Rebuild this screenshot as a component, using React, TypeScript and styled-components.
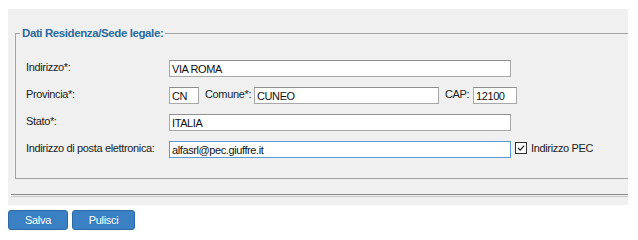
import styled, { createGlobalStyle } from "styled-components";

const FONT = `"Liberation Sans", Arial, sans-serif`;

const GlobalStyle = createGlobalStyle`
  body {
    margin: 0;
    background: #ffffff;
    font-family: ${FONT};
    color: #222222;
  }
`;

const Page = styled.div`
  padding: 9px 10px 0 8px;
`;

const Panel = styled.div`
  width: 620px;
  background: #f0f0f0;
  padding: 16px 0 8px 0;
  overflow: hidden;
`;

const FieldSet = styled.fieldset`
  margin: 0 0 0 7px;
  padding: 0;
  border: 1px solid #a3a3a3;
  border-right: none;
  min-width: 0;
`;

const Legend = styled.legend`
  margin-left: 4px;
  padding: 0 2px;
  font-family: ${FONT};
  font-size: 11.5px;
  letter-spacing: -0.4px;
  line-height: 16px;
  font-weight: bold;
  color: #2a6a9c;
`;

const FormGrid = styled.div`
  display: grid;
  grid-template-columns: 143px 1fr;
  row-gap: 10px;
  align-items: center;
  padding: 19px 0 20px 10px;
`;

const Label = styled.label`
  font-size: 11px;
  letter-spacing: -0.35px;
  line-height: 14px;
  color: #222222;
  margin-top: -3px;
  white-space: nowrap;
`;

const Cell = styled.div`
  display: flex;
  align-items: center;
`;

const Input = styled.input<{ $w: number; $focused?: boolean }>`
  box-sizing: border-box;
  width: ${(p) => p.$w}px;
  height: 17px;
  margin: 0;
  padding: 1px 2px 0;
  border: 1px solid ${(p) => (p.$focused ? "#5b9bd5" : "#a8a8a8")};
  border-top-color: ${(p) => (p.$focused ? "#5b9bd5" : "#8f8f8f")};
  background: #ffffff;
  font-family: ${FONT};
  font-size: 11px;
  letter-spacing: -0.4px;
  color: #111111;
  outline: none;
`;

const InlineLabel = styled.span<{ $w: number }>`
  width: ${(p) => p.$w}px;
  margin: -4px 0 0 6px;
  font-size: 11px;
  letter-spacing: -0.35px;
  color: #222222;
  white-space: nowrap;
`;

const CheckWrap = styled.label`
  display: flex;
  align-items: center;
  margin-left: 4px;
  margin-top: -4px;
  font-size: 11px;
  letter-spacing: -0.35px;
  color: #222222;
`;

const Box = styled.span`
  display: inline-flex;
  width: 12px;
  height: 12px;
  box-sizing: border-box;
  border: 1px solid #333333;
  background: #ffffff;
  margin-right: 4px;
`;

const Rule = styled.div`
  margin: 15px 0 0 3px;
  height: 1px;
  border-top: 1px solid #8a8a8a;
  border-bottom: 1px solid #c8c8c8;
`;

const Actions = styled.div`
  display: flex;
  gap: 4px;
  margin-top: 5px;
`;

const Button = styled.button<{ $w: number }>`
  width: ${(p) => p.$w}px;
  height: 20px;
  padding: 0;
  border: 1px solid #2d6aa5;
  border-radius: 3px;
  background: #3a80c2;
  color: #ffffff;
  font-family: ${FONT};
  font-size: 11px;
  letter-spacing: -0.3px;
`;

const Check = () => (
  <Box>
    <svg width="10" height="10" viewBox="0 0 10 10">
      <path d="M2 5 L4.2 7.2 L8.2 2.6" fill="none" stroke="#222" strokeWidth="1.2" />
    </svg>
  </Box>
);

export default function App() {
  return (
    <Page>
      <GlobalStyle />
      <Panel>
        <FieldSet>
          <Legend>Dati Residenza/Sede legale:</Legend>
          <FormGrid>
            <Label>Indirizzo*:</Label>
            <Cell>
              <Input $w={342} defaultValue="VIA ROMA" />
            </Cell>

            <Label>Provincia*:</Label>
            <Cell>
              <Input $w={30} defaultValue="CN" />
              <InlineLabel $w={49}>Comune*:</InlineLabel>
              <Input $w={185} defaultValue="CUNEO" />
              <InlineLabel $w={28}>CAP:</InlineLabel>
              <Input $w={44} defaultValue="12100" />
            </Cell>

            <Label>Stato*:</Label>
            <Cell>
              <Input $w={342} defaultValue="ITALIA" />
            </Cell>

            <Label>Indirizzo di posta elettronica:</Label>
            <Cell>
              <Input $w={342} $focused defaultValue="alfasrl@pec.giuffre.it" />
              <CheckWrap>
                <Check />
                Indirizzo PEC
              </CheckWrap>
            </Cell>
          </FormGrid>
        </FieldSet>
        <Rule />
      </Panel>
      <Actions>
        <Button $w={60}>Salva</Button>
        <Button $w={63}>Pulisci</Button>
      </Actions>
    </Page>
  );
}
